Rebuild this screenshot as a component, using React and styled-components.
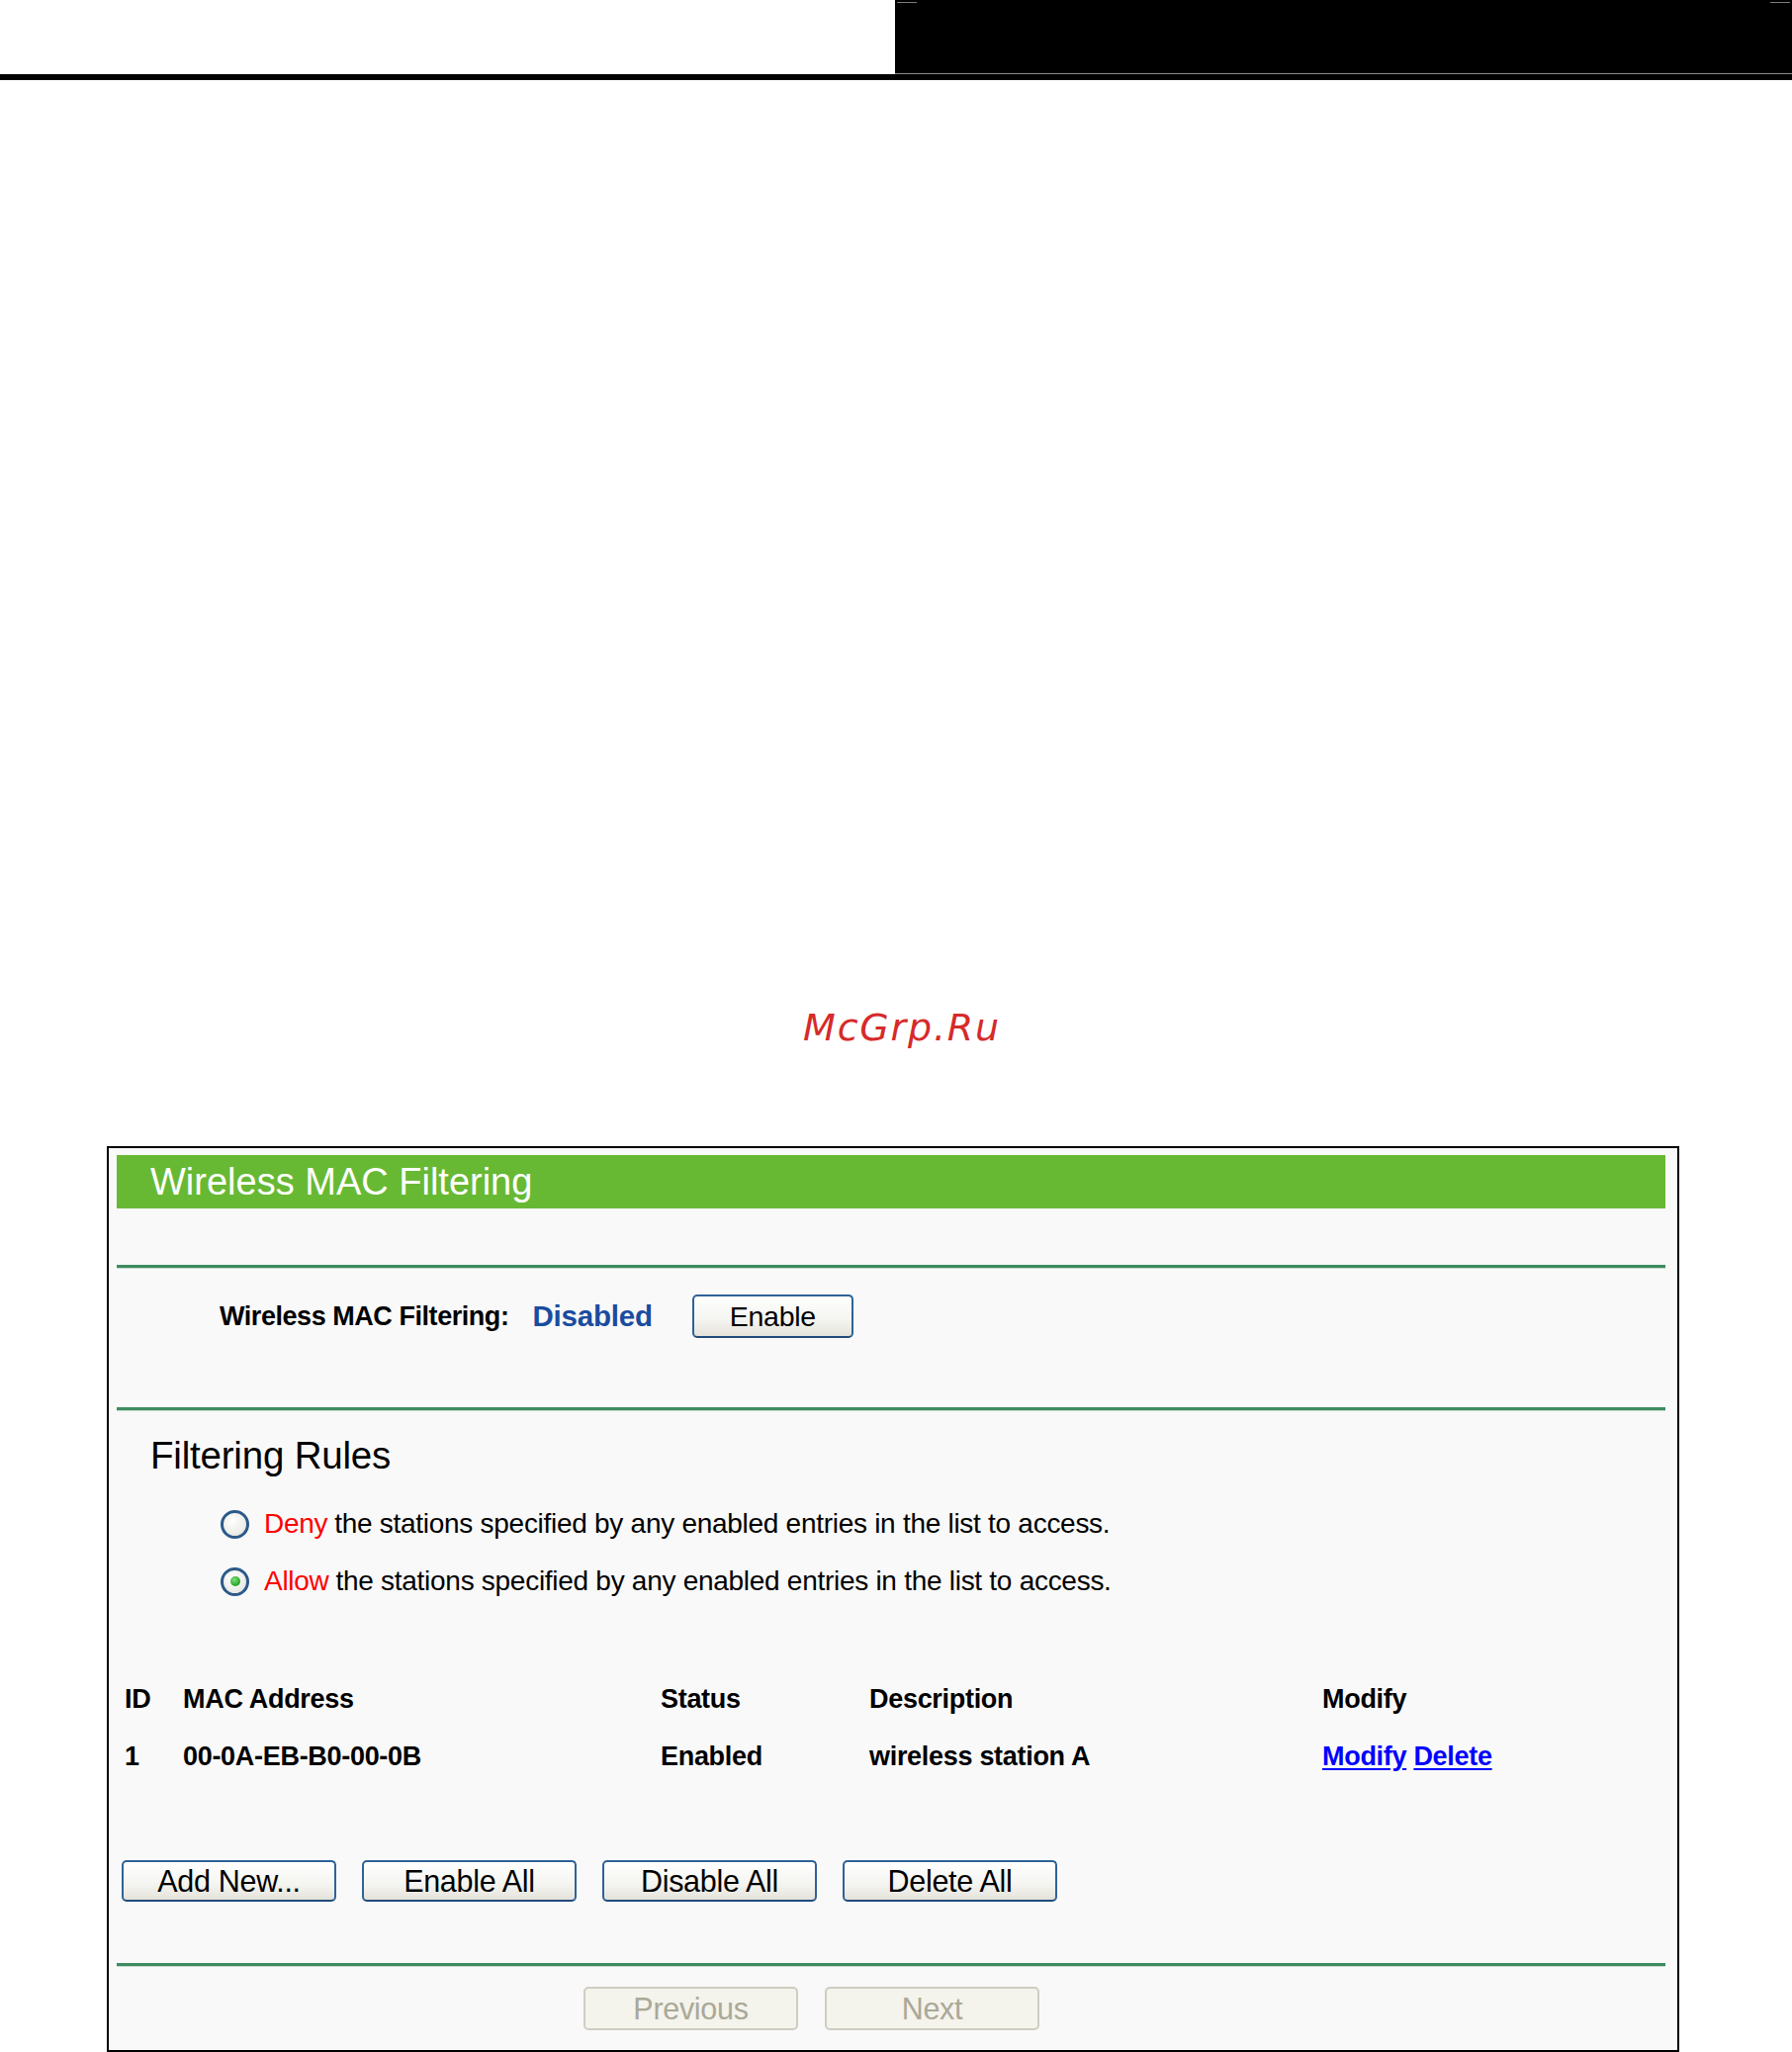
import React from 'react'
import styled, { createGlobalStyle } from 'styled-components'

const GlobalStyle = createGlobalStyle`
    html, body {
        margin: 0;
        padding: 0;
        background: #ffffff;
        font-family: "Liberation Sans", Arial, sans-serif;
    }
    * { box-sizing: border-box; }
`;

const TopBar = styled.header`
    display: flex;
    height: 81px;
    border-bottom: 6px solid #000;
`;

const BlankSide = styled.div`
    width: 905px;
    background: #fff;
`;

const BlackSide = styled.div`
    position: relative;
    flex: 1;
    background: #000;
    border-bottom: 1px solid #8c8c8c;

    &::before, &::after {
        content: '';
        position: absolute;
        top: 2px;
        width: 20px;
        height: 1px;
        background: #7c7c7c;
    }
    &::before { left: 2px; }
    &::after { right: 2px; }
`;

const Watermark = styled.div`
    margin-top: 936px;
    padding-left: 12px;
    text-align: center;
    font-family: "DejaVu Sans", "Liberation Sans", sans-serif;
    font-style: italic;
    font-size: 38px;
    line-height: 44px;
    letter-spacing: 1.8px;
    color: #d62a2a;
`;

const Panel = styled.section`
    margin: 98px 0 0 108px;
    width: 1590px;
    border: 2px solid #000;
    background: #f9f9f9;
    padding: 7px 12px 20px 8px;
`;

const TitleBar = styled.div`
    height: 54px;
    background: #67b934;
    display: flex;
    align-items: center;
    padding-left: 34px;
    color: #fff;
    font-size: 38px;
    letter-spacing: 0;
`;

const Divider = styled.div`
    height: 4px;
    margin-top: ${p => p.$top}px;
    border-top: 3px solid #3d8b5f;
    border-bottom: 1px solid #c3dacb;
`;

const StatusRow = styled.div`
    display: flex;
    align-items: center;
    padding: 26px 0 70px 104px;
`;

const Label = styled.span`
    font-weight: bold;
    font-size: 27px;
    letter-spacing: -0.45px;
    color: #000;
`;

const StatusValue = styled.span`
    margin-left: 24px;
    font-weight: bold;
    font-size: 29.5px;
    letter-spacing: -0.2px;
    color: #1a4c9f;
`;

const Button = styled.button`
    width: ${p => p.$width || 217}px;
    height: ${p => p.$height || 42}px;
    margin-left: ${p => p.$left || 0}px;
    padding: 0;
    font-family: "Liberation Sans", Arial, sans-serif;
    font-size: ${p => p.$size || 30.5}px;
    letter-spacing: -0.3px;
    color: #000;
    border: 2px solid #2f6299;
    border-bottom-color: #224c7c;
    border-radius: 5px;
    background: linear-gradient(#ffffff 0%, #f4f4f0 60%, #e4e2da 100%);
    cursor: pointer;

    &:disabled {
        color: #aba897;
        border-color: #cfcdc0;
        background: #f4f3ec;
        cursor: default;
    }
`;

const Heading = styled.h2`
    margin: 23px 0 0 34px;
    font-size: 38.5px;
    line-height: 44px;
    font-weight: normal;
    letter-spacing: -0.2px;
    color: #000;
`;

const RadioList = styled.div`
    display: flex;
    flex-direction: column;
    gap: 18px;
    margin: 27px 0 0 105px;
`;

const RadioRow = styled.label`
    display: flex;
    align-items: center;
    height: 40px;
    font-size: 28px;
    letter-spacing: -0.28px;
    color: #000;
`;

const RadioCircle = styled.span`
    position: relative;
    width: 29px;
    height: 29px;
    margin-right: 15px;
    border-radius: 50%;
    border: 3px solid #2b5a8a;
    background: radial-gradient(circle at 40% 35%, #ffffff 0%, #ededea 60%, #d7d6cf 100%);

    &::after {
        content: '';
        display: ${p => (p.$checked ? 'block' : 'none')};
        position: absolute;
        left: 50%;
        top: 50%;
        width: 10px;
        height: 10px;
        margin: -5px 0 0 -5px;
        border-radius: 50%;
        background: radial-gradient(circle at 40% 35%, #7fe07f 0%, #22a322 70%);
    }
`;

const Red = styled.span`
    color: #ff0000;
    margin-right: 7px;
`;

const Table = styled.div`
    margin-top: 70px;
    padding-left: 8px;
`;

const TableRow = styled.div`
    display: grid;
    grid-template-columns: 59px 483px 211px 458px 1fr;
    align-items: center;
    height: 58px;
    font-weight: bold;
    font-size: 27px;
    letter-spacing: -0.3px;
    color: #000;
`;

const Link = styled.a`
    color: #0000ff;
    text-decoration: underline;
    text-underline-offset: 3px;
    cursor: pointer;
`;

const ButtonRow = styled.div`
    display: flex;
    gap: 26px;
    margin: 76px 0 0 5px;
`;

const PagerRow = styled.div`
    display: flex;
    gap: 27px;
    margin: 20px 0 0 472px;
`;

const rules = [
    { key: 'deny', word: 'Deny', checked: false },
    { key: 'allow', word: 'Allow', checked: true },
];

const entries = [
    { id: 1, mac: '00-0A-EB-B0-00-0B', status: 'Enabled', description: 'wireless station A' },
];

const App = () => {
    return (
        <>
            <GlobalStyle />
            <TopBar>
                <BlankSide />
                <BlackSide />
            </TopBar>

            <Watermark>McGrp.Ru</Watermark>

            <Panel>
                <TitleBar>Wireless MAC Filtering</TitleBar>

                <Divider $top={57} />
                <StatusRow>
                    <Label>Wireless MAC Filtering:</Label>
                    <StatusValue>Disabled</StatusValue>
                    <Button $width={163} $height={44} $size={28.5} $left={40}>Enable</Button>
                </StatusRow>

                <Divider $top={0} />
                <Heading>Filtering Rules</Heading>
                <RadioList>
                    {rules.map(r => (
                        <RadioRow key={r.key}>
                            <RadioCircle $checked={r.checked} />
                            <Red>{r.word}</Red>
                            the stations specified by any enabled entries in the list to access.
                        </RadioRow>
                    ))}
                </RadioList>

                <Table>
                    <TableRow>
                        <span>ID</span>
                        <span>MAC Address</span>
                        <span>Status</span>
                        <span>Description</span>
                        <span>Modify</span>
                    </TableRow>
                    {entries.map(e => (
                        <TableRow key={e.id}>
                            <span>{e.id}</span>
                            <span>{e.mac}</span>
                            <span>{e.status}</span>
                            <span>{e.description}</span>
                            <span>
                                <Link>Modify</Link> <Link>Delete</Link>
                            </span>
                        </TableRow>
                    ))}
                </Table>

                <ButtonRow>
                    <Button>Add New...</Button>
                    <Button>Enable All</Button>
                    <Button>Disable All</Button>
                    <Button>Delete All</Button>
                </ButtonRow>

                <Divider $top={62} />
                <PagerRow>
                    <Button $height={44} disabled>Previous</Button>
                    <Button $height={44} disabled>Next</Button>
                </PagerRow>
            </Panel>
        </>
    )
}

export default App
